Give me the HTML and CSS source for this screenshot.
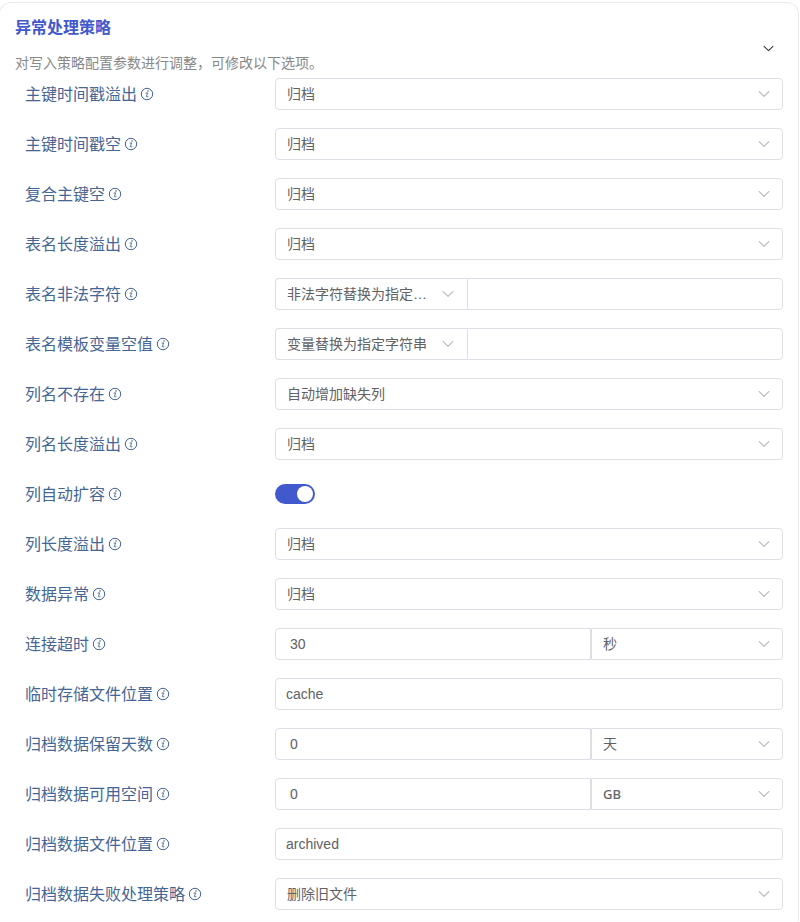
FILE: index.html
```html
<!DOCTYPE html>
<html lang="zh-CN">
<head>
    <meta charset="UTF-8">
    <meta name="viewport" content="width=device-width, initial-scale=1.0">
    <title>异常处理策略</title>
    <link rel="stylesheet" href="styles.css">
</head>
<body>

<!-- shared icons -->
<svg class="sprite" aria-hidden="true">
    <symbol id="icon-info" viewBox="0 0 14 14">
        <circle cx="7" cy="7" r="5.7" fill="none" stroke="currentColor" stroke-width="1"/>
        <circle cx="8" cy="4" r="0.8" fill="currentColor"/>
        <path d="M6 6.1 7.6 5.8 6.4 9.6Q6.3 10.7 8 9.6" fill="none" stroke="currentColor" stroke-width="0.9" stroke-linecap="round" stroke-linejoin="round"/>
    </symbol>
    <symbol id="icon-arrow" viewBox="0 0 14 14">
        <path d="M2.2 4.7 7 9.3l4.8-4.6" fill="none" stroke="currentColor" stroke-width="1.1" stroke-linecap="round" stroke-linejoin="round"/>
    </symbol>
</svg>

<section class="panel">
    <header class="panel-header">
        <div>
            <h2>异常处理策略</h2>
            <p>对写入策略配置参数进行调整，可修改以下选项。</p>
        </div>
        <button type="button" class="collapse-btn" aria-label="折叠"><svg><use href="#icon-arrow"/></svg></button>
    </header>

    <form class="form">
        <div class="row">
            <label for="keyOverflow">主键时间戳溢出<svg class="info"><use href="#icon-info"/></svg></label>
            <div class="field">
                <div class="select"><select id="keyOverflow"><option>归档</option></select><svg><use href="#icon-arrow"/></svg></div>
            </div>
        </div>
        <div class="row">
            <label for="keyNull">主键时间戳空<svg class="info"><use href="#icon-info"/></svg></label>
            <div class="field">
                <div class="select"><select id="keyNull"><option>归档</option></select><svg><use href="#icon-arrow"/></svg></div>
            </div>
        </div>
        <div class="row">
            <label for="compositeNull">复合主键空<svg class="info"><use href="#icon-info"/></svg></label>
            <div class="field">
                <div class="select"><select id="compositeNull"><option>归档</option></select><svg><use href="#icon-arrow"/></svg></div>
            </div>
        </div>
        <div class="row">
            <label for="tableLength">表名长度溢出<svg class="info"><use href="#icon-info"/></svg></label>
            <div class="field">
                <div class="select"><select id="tableLength"><option>归档</option></select><svg><use href="#icon-arrow"/></svg></div>
            </div>
        </div>
        <div class="row">
            <label for="tableIllegal">表名非法字符<svg class="info"><use href="#icon-info"/></svg></label>
            <div class="field prepend">
                <div class="select"><select id="tableIllegal"><option>非法字符替换为指定字符串</option></select><svg><use href="#icon-arrow"/></svg></div>
                <input type="text" aria-label="替换字符串">
            </div>
        </div>
        <div class="row">
            <label for="templateNull">表名模板变量空值<svg class="info"><use href="#icon-info"/></svg></label>
            <div class="field prepend">
                <div class="select"><select id="templateNull"><option>变量替换为指定字符串</option></select><svg><use href="#icon-arrow"/></svg></div>
                <input type="text" aria-label="替换字符串">
            </div>
        </div>
        <div class="row">
            <label for="columnMissing">列名不存在<svg class="info"><use href="#icon-info"/></svg></label>
            <div class="field">
                <div class="select"><select id="columnMissing"><option>自动增加缺失列</option></select><svg><use href="#icon-arrow"/></svg></div>
            </div>
        </div>
        <div class="row">
            <label for="columnName">列名长度溢出<svg class="info"><use href="#icon-info"/></svg></label>
            <div class="field">
                <div class="select"><select id="columnName"><option>归档</option></select><svg><use href="#icon-arrow"/></svg></div>
            </div>
        </div>
        <div class="row">
            <label for="autoExpand">列自动扩容<svg class="info"><use href="#icon-info"/></svg></label>
            <div class="field">
                <input type="checkbox" class="switch" id="autoExpand" checked>
            </div>
        </div>
        <div class="row">
            <label for="columnLength">列长度溢出<svg class="info"><use href="#icon-info"/></svg></label>
            <div class="field">
                <div class="select"><select id="columnLength"><option>归档</option></select><svg><use href="#icon-arrow"/></svg></div>
            </div>
        </div>
        <div class="row">
            <label for="dataError">数据异常<svg class="info"><use href="#icon-info"/></svg></label>
            <div class="field">
                <div class="select"><select id="dataError"><option>归档</option></select><svg><use href="#icon-arrow"/></svg></div>
            </div>
        </div>
        <div class="row">
            <label for="timeout">连接超时<svg class="info"><use href="#icon-info"/></svg></label>
            <div class="field append">
                <input type="number" id="timeout" value="30">
                <div class="select"><select aria-label="时间单位"><option>秒</option></select><svg><use href="#icon-arrow"/></svg></div>
            </div>
        </div>
        <div class="row">
            <label for="cachePath">临时存储文件位置<svg class="info"><use href="#icon-info"/></svg></label>
            <div class="field">
                <input type="text" id="cachePath" value="cache">
            </div>
        </div>
        <div class="row">
            <label for="keepDays">归档数据保留天数<svg class="info"><use href="#icon-info"/></svg></label>
            <div class="field append">
                <input type="number" id="keepDays" value="0">
                <div class="select"><select aria-label="时间单位"><option>天</option></select><svg><use href="#icon-arrow"/></svg></div>
            </div>
        </div>
        <div class="row">
            <label for="maxSpace">归档数据可用空间<svg class="info"><use href="#icon-info"/></svg></label>
            <div class="field append">
                <input type="number" id="maxSpace" value="0">
                <div class="select"><select class="unit-size" aria-label="空间单位"><option>GB</option></select><svg><use href="#icon-arrow"/></svg></div>
            </div>
        </div>
        <div class="row">
            <label for="archivePath">归档数据文件位置<svg class="info"><use href="#icon-info"/></svg></label>
            <div class="field">
                <input type="text" id="archivePath" value="archived">
            </div>
        </div>
        <div class="row">
            <label for="archiveFail">归档数据失败处理策略<svg class="info"><use href="#icon-info"/></svg></label>
            <div class="field">
                <div class="select"><select id="archiveFail"><option>删除旧文件</option></select><svg><use href="#icon-arrow"/></svg></div>
            </div>
        </div>
    </form>
</section>

</body>
</html>
```
FILE: styles.css
```css
* {
    box-sizing: border-box;
}
body {
    margin: 2px 1px 0 -1px;
    background-color: #fff;
    font-family: "Liberation Sans", "Noto Sans CJK SC", sans-serif;
    font-size: 14px;
    color: #606266;
}
.sprite {
    display: none;
}
.panel {
    border: 1px solid #ebebeb;
    border-bottom: none;
    border-radius: 12px 12px 0 0;
    padding: 12px 15px;
}
.panel-header {
    display: flex;
    justify-content: space-between;
    align-items: flex-start;
    height: 63px;
}
.panel-header h2 {
    margin: 0 0 12px;
    font-family: "Noto Sans", "Noto Sans CJK SC", sans-serif;
    font-size: 16px;
    line-height: 24px;
    color: #4259ce;
}
.panel-header p {
    margin: 0;
    line-height: 24px;
    color: #888;
}
.collapse-btn {
    display: flex;
    align-self: center;
    margin-top: 4px;
    padding: 8px;
    border: none;
    background: none;
    color: #303133;
    cursor: pointer;
}
.collapse-btn svg {
    width: 13px;
    height: 13px;
}
.form {
    display: grid;
    gap: 18px;
}
.row {
    display: grid;
    grid-template-columns: 250px 1fr;
    align-items: center;
    margin-left: 10px;
}
.row label {
    display: flex;
    align-items: center;
    gap: 3px;
    font-family: "Noto Sans", "Noto Sans CJK SC", sans-serif;
    font-size: 16px;
    line-height: 32px;
    color: #456594;
}
.info {
    width: 14px;
    height: 14px;
}
.field {
    display: flex;
    align-items: center;
    height: 32px;
}
.select {
    position: relative;
    flex: 1;
}
/* arrow lies over the select */
.select svg {
    position: absolute;
    top: 9px;
    right: 12px;
    width: 14px;
    height: 14px;
    color: #b4b8c0;
    pointer-events: none;
}
select,
input[type="text"],
input[type="number"] {
    display: block;
    width: 100%;
    height: 32px;
    margin: 0;
    padding: 0 10px;
    border: 1px solid #dcdfe6;
    border-radius: 4px;
    outline: none;
    background-color: #fff;
    font-family: inherit;
    font-size: 14px;
    color: #606266;
}
select {
    appearance: none;
    padding: 0 40px 0 11px;
    text-overflow: ellipsis;
}
input[type="number"] {
    padding: 0 14px;
    appearance: textfield;
}
.prepend .select,
.append .select {
    flex: 0 0 192px;
}
.field.prepend input,
.field.append input {
    flex: 1;
    min-width: 0;
}
.prepend select {
    border-right: none;
    border-radius: 4px 0 0 4px;
}
.prepend input[type="text"] {
    border-radius: 0 4px 4px 0;
}
.append input[type="number"] {
    border-radius: 4px 0 0 4px;
}
.append select {
    border-radius: 0 4px 4px 0;
}
select.unit-size {
    font-family: "Noto Sans", sans-serif;
    font-size: 13px;
    font-weight: 500;
}
.switch {
    appearance: none;
    display: flex;
    align-items: center;
    justify-content: flex-end;
    width: 40px;
    height: 20px;
    margin: 0;
    padding: 1px;
    border-radius: 10px;
    background-color: #dcdfe6;
    cursor: pointer;
}
.switch::before {
    content: "";
    width: 16px;
    height: 16px;
    margin: 0 1px;
    border-radius: 50%;
    background-color: #fff;
}
.switch:checked {
    background-color: #4259ce;
}
.switch:not(:checked) {
    justify-content: flex-start;
}
```
